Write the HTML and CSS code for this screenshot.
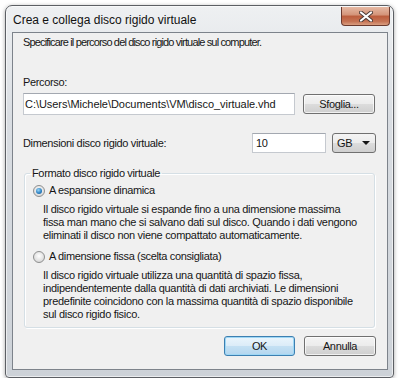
FILE: index.html
```html
<!DOCTYPE html>
<html lang="it">
<head>
    <meta charset="UTF-8">
    <meta name="viewport" content="width=device-width, initial-scale=1.0">
    <title>Crea e collega disco rigido virtuale</title>
    <link rel="stylesheet" href="styles.css">
</head>
<body>
    <div class="window">
        <div class="titlebar">
            <span class="title">Crea e collega disco rigido virtuale</span>
            <span class="close">
                <svg width="14" height="11" viewBox="0 0 14 11">
                    <path d="M2 1.5 L12 9.5 M12 1.5 L2 9.5" stroke="#4a3a36" stroke-width="4" stroke-linecap="round"/>
                    <path d="M2 1.5 L12 9.5 M12 1.5 L2 9.5" stroke="#ffffff" stroke-width="2.2" stroke-linecap="round"/>
                </svg>
            </span>
        </div>

        <div class="client">
            <p class="intro">Specificare il percorso del disco rigido virtuale sul computer.</p>

            <p class="label">Percorso:</p>
            <div class="path-row">
                <div class="textbox path">C:\Users\Michele\Documents\VM\disco_virtuale.vhd</div>
                <button class="btn browse">Sfoglia...</button>
            </div>

            <div class="size-row">
                <span class="size-label">Dimensioni disco rigido virtuale:</span>
                <div class="textbox size">10</div>
                <div class="combo">GB <span class="arrow"></span></div>
            </div>

            <fieldset class="group">
                <legend>Formato disco rigido virtuale</legend>

                <div class="option">
                    <span class="radio checked"></span>
                    <span>A espansione dinamica</span>
                </div>
                <p class="desc">Il disco rigido virtuale si espande fino a una dimensione massima<br>
                    fissa man mano che si salvano dati sul disco. Quando i dati vengono<br>
                    eliminati il disco non viene compattato automaticamente.</p>

                <div class="option second">
                    <span class="radio"></span>
                    <span>A dimensione fissa (scelta consigliata)</span>
                </div>
                <p class="desc">Il disco rigido virtuale utilizza una quantità di spazio fissa,<br>
                    indipendentemente dalla quantità di dati archiviati. Le dimensioni<br>
                    predefinite coincidono con la massima quantità di spazio disponibile<br>
                    sul disco rigido fisico.</p>
            </fieldset>

            <div class="actions">
                <button class="btn default">OK</button>
                <button class="btn">Annulla</button>
            </div>
        </div>
    </div>
</body>
</html>
```

FILE: styles.css
```css
body {
    margin: 0;
    background: #ffffff;
    font-family: "Liberation Sans", Arial, sans-serif;
    font-size: 11px;
    letter-spacing: -0.35px;
    color: #161616;
}
p { margin: 0; }

.window {
    margin: 5px 0 0 5px;
    width: 389px;
    height: 373px;
    box-sizing: border-box;
    display: flex;
    flex-direction: column;
    padding: 0 5px 7px 6px;
    border: 1px solid #5c5f64;
    border-radius: 7px 7px 4px 4px;
    background: linear-gradient(#eef0f2, #d9dde2 30%, #cdd2d8);
    box-shadow: 0 1px 4px rgba(0, 0, 0, 0.35), inset 0 0 0 1px rgba(255, 255, 255, 0.6);
}

.titlebar {
    height: 26px;
    display: flex;
    align-items: flex-start;
    justify-content: space-between;
}
.title {
    font-size: 12px;
    letter-spacing: 0;
    color: #111;
    margin-top: 7px;
    margin-left: 1px;
}
.close {
    width: 47px;
    height: 18px;
    margin-top: 1px;
    margin-right: -2px;
    display: flex;
    align-items: center;
    justify-content: center;
    border: 1px solid #6b3a2e;
    border-top: none;
    border-radius: 0 0 4px 4px;
    background: linear-gradient(#e6b9a4, #d39378 45%, #bb5c3c 50%, #c57354 80%, #d99e80);
}

.client {
    flex: 1;
    border: 1px solid #7d838b;
    background: #f0f0f0;
    padding: 3px 11px 0 10px;
}

.intro {
    line-height: 13px;
    letter-spacing: -0.85px;
}
.label {
    margin-top: 27px;
    line-height: 13px;
}

.path-row {
    margin-top: 4px;
    display: flex;
    align-items: center;
    gap: 8px;
}
.textbox {
    box-sizing: border-box;
    background: #ffffff;
    border: 1px solid #c5c9cf;
    border-top-color: #a3a8b0;
    height: 22px;
    line-height: 20px;
    padding: 0 3px;
    white-space: nowrap;
    overflow: hidden;
}
.path {
    width: 272px;
    padding-left: 1px;
    letter-spacing: -0.05px;
}

.btn {
    box-sizing: border-box;
    height: 20px;
    width: 72px;
    padding: 0;
    font-family: inherit;
    font-size: 11px;
    letter-spacing: -0.35px;
    color: #161616;
    border: 1px solid #707070;
    border-radius: 3px;
    background: linear-gradient(#f4f4f4, #ececec 48%, #dcdcdc 52%, #cfcfcf);
    box-shadow: inset 0 0 0 1px rgba(255, 255, 255, 0.7);
}
.btn.default {
    width: 71px;
    border-color: #3c7fb1;
    background: linear-gradient(#eaf5fc, #dcecf8 48%, #c4e0f3 52%, #b3d6ef);
    box-shadow: inset 0 0 0 1px #9ed7f5;
}

.size-row {
    margin-top: 18px;
    display: flex;
    align-items: center;
}
.size-label {
    flex: 1;
}
.size {
    width: 74px;
    height: 20px;
    line-height: 18px;
}
.combo {
    box-sizing: border-box;
    width: 44px;
    height: 20px;
    margin-left: 6px;
    display: flex;
    align-items: center;
    justify-content: space-between;
    padding: 0 5px 0 4px;
    border: 1px solid #707070;
    border-radius: 3px;
    background: linear-gradient(#f4f4f4, #ececec 48%, #dcdcdc 52%, #cfcfcf);
}
.arrow {
    width: 0;
    height: 0;
    border-left: 4px solid transparent;
    border-right: 4px solid transparent;
    border-top: 4px solid #161616;
}

.group {
    margin: 14px 1px 0 1px;
    padding: 4px 6px 6px 5px;
    border: 1px solid #d5dfe5;
    border-radius: 3px;
    box-shadow: 1px 1px 0 #ffffff, inset 1px 1px 0 #ffffff;
}
.group legend {
    padding: 0 2px;
    line-height: 13px;
}

.option {
    display: flex;
    align-items: center;
    gap: 4px;
    margin-left: 3px;
    line-height: 13px;
}
.option.second {
    margin-top: 8px;
}
.radio {
    box-sizing: border-box;
    width: 12px;
    height: 12px;
    border-radius: 50%;
    border: 1px solid #8e8f8f;
    background: radial-gradient(circle at 50% 40%, #ffffff, #dcdcdc 70%, #c6c6c6);
    position: relative;
}
.radio.checked::after {
    content: "";
    position: absolute;
    left: 2px;
    top: 2px;
    width: 6px;
    height: 6px;
    border-radius: 50%;
    background: radial-gradient(circle at 40% 35%, #9ad6f7, #2f84c4 55%, #0d4f8e);
}

.desc {
    margin-top: 6px;
    margin-left: 13px;
    line-height: 13px;
    letter-spacing: -0.3px;
    white-space: nowrap;
}

.actions {
    margin-top: 8px;
    display: flex;
    justify-content: flex-end;
    gap: 9px;
}
```
